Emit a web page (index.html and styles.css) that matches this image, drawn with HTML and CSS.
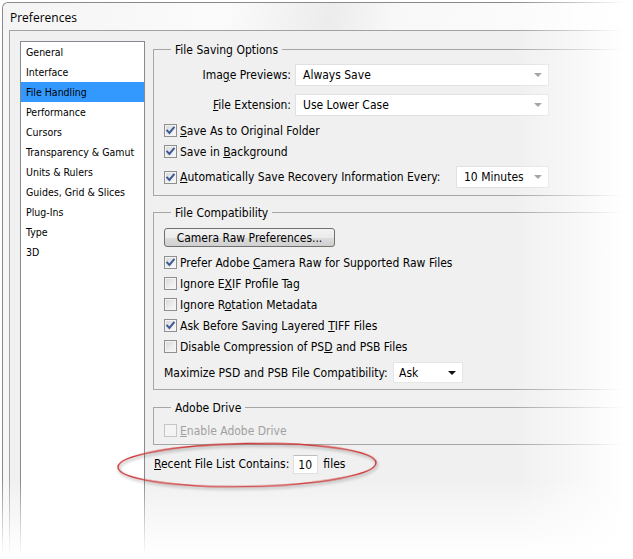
FILE: index.html
```html
<!DOCTYPE html>
<html lang="en">
<head>
  <meta charset="UTF-8">
  <title>Preferences</title>
  <link rel="stylesheet" href="styles.css">
</head>
<body>
  <div class="window">
    <div class="titlebar">Preferences</div>
    <div class="frame">
      <div class="client">
        <!-- Category list -->
        <ul class="nav">
          <li>General</li>
          <li>Interface</li>
          <li class="active">File Handling</li>
          <li>Performance</li>
          <li>Cursors</li>
          <li>Transparency &amp; Gamut</li>
          <li>Units &amp; Rulers</li>
          <li>Guides, Grid &amp; Slices</li>
          <li>Plug-Ins</li>
          <li>Type</li>
          <li>3D</li>
        </ul>

        <!-- Settings panel -->
        <div class="panel">
          <section class="group saving">
            <div class="group-head"><span>File Saving Options</span></div>
            <div class="group-body">
              <div class="field">
                <span class="field-label">Ima<u>g</u>e Previews:</span>
                <div class="select wide"><span>Always Save</span><i class="arrow"></i></div>
              </div>
              <div class="field">
                <span class="field-label"><u>F</u>ile Extension:</span>
                <div class="select wide"><span>Use Lower Case</span><i class="arrow"></i></div>
              </div>
              <div class="check first">
                <span class="box"><svg viewBox="0 0 11 11"><polyline points="2.2,5.6 4.4,8 8.8,2.6"/></svg></span>
                <span><u>S</u>ave As to Original Folder</span>
              </div>
              <div class="check">
                <span class="box"><svg viewBox="0 0 11 11"><polyline points="2.2,5.6 4.4,8 8.8,2.6"/></svg></span>
                <span>Save in <u>B</u>ackground</span>
              </div>
              <div class="check with-select">
                <span class="box"><svg viewBox="0 0 11 11"><polyline points="2.2,5.6 4.4,8 8.8,2.6"/></svg></span>
                <span><u>A</u>utomatically Save Recovery Information Every:</span>
                <div class="select minutes"><span>10 Minutes</span><i class="arrow"></i></div>
              </div>
            </div>
          </section>

          <section class="group compat">
            <div class="group-head"><span>File Compatibility</span></div>
            <div class="group-body">
              <button class="btn">Camera Raw Preferences...</button>
              <div class="check first">
                <span class="box"><svg viewBox="0 0 11 11"><polyline points="2.2,5.6 4.4,8 8.8,2.6"/></svg></span>
                <span>Prefer Adobe <u>C</u>amera Raw for Supported Raw Files</span>
              </div>
              <div class="check">
                <span class="box"></span>
                <span>Ignore E<u>X</u>IF Profile Tag</span>
              </div>
              <div class="check">
                <span class="box"></span>
                <span>Ignore R<u>o</u>tation Metadata</span>
              </div>
              <div class="check">
                <span class="box"><svg viewBox="0 0 11 11"><polyline points="2.2,5.6 4.4,8 8.8,2.6"/></svg></span>
                <span>Ask Before Saving Layered <u>T</u>IFF Files</span>
              </div>
              <div class="check">
                <span class="box"></span>
                <span>Disable Compression of PS<u>D</u> and PSB Files</span>
              </div>
              <div class="maximize">
                <span class="maximize-label">Maximize PSD and PSB File Compatibility:</span>
                <div class="select ask"><span>Ask</span><i class="arrow dark"></i></div>
              </div>
            </div>
          </section>

          <section class="group drive">
            <div class="group-head"><span>Adobe Drive</span></div>
            <div class="group-body">
              <div class="check disabled">
                <span class="box"></span>
                <span><u>E</u>nable Adobe Drive</span>
              </div>
            </div>
          </section>

          <div class="recent">
            <span><u>R</u>ecent File List Contains:</span>
            <span class="num-input">10</span>
            <span>files</span>
          </div>
        </div>
      </div>
    </div>
  </div>

  <!-- annotation ring and edge fades drawn over the screenshot -->
  <svg class="ring" width="633" height="559" viewBox="0 0 633 559">
    <ellipse cx="247" cy="465" rx="129" ry="21.5" transform="rotate(-1 247 465)"/>
  </svg>
  <div class="fade fade-right"></div>
  <div class="fade fade-bottom"></div>
</body>
</html>
```

FILE: styles.css
```css
/* Basic reset */
* {
  box-sizing: border-box;
}
body {
  margin: 0;
  width: 633px;
  height: 559px;
  overflow: hidden;
  position: relative;
  background: #fff;
  font-family: "DejaVu Sans Condensed", "DejaVu Sans", sans-serif;
  font-size: 12px;
  color: #000;
}
u {
  text-underline-offset: 1px;
}

/* Window frame */
.window {
  margin: 2px 0 0 2px;
  width: 631px;
  height: 557px;
  overflow: hidden;
  border: 1px solid #8a8a8a;
  border-right: none;
  border-bottom: none;
  border-radius: 6px 0 0 0;
  background: #f7f7f7;
  display: flex;
  flex-direction: column;
}
.titlebar {
  height: 27px;
  flex: none;
  padding: 1px 0 0 7px;
  display: flex;
  align-items: center;
  font-family: "Open Sans", "Noto Sans", sans-serif;
  font-size: 12px;
  border-radius: 5px 0 0 0;
  background: linear-gradient(100deg, #f4f4f4 0%, #fbfbfb 35%, #ececec 52%, #f8f8f8 62%, #fdfdfd 100%);
}
.frame {
  flex: 1;
  min-height: 0;
  display: flex;
  padding-left: 6px;
}
.client {
  flex: 1;
  min-width: 0;
  display: flex;
  padding: 10px 0 0 10px;
  background: #f0f0f0;
  border-top: 1px solid #a2a2a2;
  border-left: 1px solid #a2a2a2;
}

/* Category list */
.nav {
  width: 125px;
  flex: none;
  margin: 0;
  padding: 0;
  list-style: none;
  background: #fff;
  border: 1px solid #868a91;
  border-bottom: none;
  font-size: 10.5px;
}
.nav li {
  height: 20px;
  line-height: 20px;
  padding-left: 5px;
  white-space: nowrap;
}
.nav li.active {
  background: #3399ff;
}

/* Settings panel */
.panel {
  flex: 1;
  min-width: 0;
  padding: 1px 0 0 8px;
}
.group-head {
  display: flex;
  height: 16px;
  align-items: center;
}
.group-head::before,
.group-head::after {
  content: '';
  height: 8px;
  align-self: flex-end;
  border-top: 1px solid #a6a6a6;
}
.group-head::before {
  width: 17px;
  border-left: 1px solid #a6a6a6;
}
.group-head::after {
  flex: 1;
}
.group-head span {
  padding: 0 4px;
}
.group-body {
  border-left: 1px solid #a6a6a6;
  border-bottom: 1px solid #a6a6a6;
  padding-left: 10px;
}
.saving .group-body {
  padding-top: 6px;
  padding-bottom: 7px;
}
.compat {
  margin-top: 9px;
}
.compat .group-body {
  padding-top: 7px;
  padding-bottom: 6px;
}
.drive {
  margin-top: 10px;
}
.drive .group-body {
  padding-top: 4px;
  padding-bottom: 3px;
}

/* Label + dropdown rows */
.field {
  display: flex;
  align-items: center;
  height: 22px;
}
.field + .field {
  margin-top: 8px;
}
.field-label {
  width: 127px;
  margin-right: 4px;
  text-align: right;
  white-space: nowrap;
}
.select {
  display: flex;
  align-items: center;
  justify-content: space-between;
  height: 22px;
  padding: 0 6px 0 7px;
  background: #fff;
  border: 1px solid #e1e1e1;
}
.select.wide {
  width: 254px;
}
.select.minutes {
  width: 93px;
  margin-left: auto;
}
.select.ask {
  width: 70px;
  height: 21px;
  padding-left: 5px;
  border-color: #e6e6e6;
}
.arrow {
  width: 0;
  height: 0;
  border-left: 4px solid transparent;
  border-right: 4px solid transparent;
  border-top: 4px solid #8f8f8f;
}
.arrow.dark {
  border-top-color: #111;
}

/* Checkboxes */
.check {
  display: flex;
  align-items: center;
  height: 21px;
  width: 385px;
  white-space: nowrap;
}
.check.first {
  margin-top: 4px;
}
.check.with-select {
  margin-top: 4px;
  height: 22px;
}
.box {
  width: 13px;
  height: 13px;
  margin-right: 3px;
  flex: none;
  border: 1px solid #8f8f8f;
  background: linear-gradient(135deg, #d6d6d6 0%, #ececec 55%, #fafafa 100%);
  box-shadow: inset 0 0 0 1px #f4f4f4;
}
.box svg {
  display: block;
  width: 11px;
  height: 11px;
}
.box polyline {
  fill: none;
  stroke: #3d5a98;
  stroke-width: 2;
  stroke-linecap: square;
}
.check.disabled {
  color: #a0a0a0;
}
.check.disabled .box {
  border-color: #c6c6c6;
  background: #f4f4f4;
  box-shadow: none;
}

/* Button */
.btn {
  display: block;
  width: 171px;
  height: 19px;
  padding: 0;
  font: inherit;
  color: #000;
  border: 1px solid #707070;
  border-radius: 3px;
  background: linear-gradient(#f3f3f3 0%, #ebebeb 50%, #dddddd 51%, #cfcfcf 100%);
}
.btn + .check.first {
  margin-top: 5px;
}

.maximize {
  display: flex;
  align-items: center;
  height: 21px;
  margin-top: 5px;
}
.maximize-label {
  width: 229px;
  white-space: nowrap;
}

/* Recent files row */
.recent {
  display: flex;
  align-items: center;
  height: 20px;
  margin-top: 9px;
  padding-left: 1px;
  white-space: nowrap;
}
.num-input {
  width: 25px;
  height: 19px;
  margin: 0 5px 0 4px;
  padding-left: 4px;
  line-height: 18px;
  background: #fff;
  border: 1px solid #e0e0e0;
  border-top-color: #bdbdbd;
}

/* Annotation ring */
.ring {
  position: absolute;
  left: 0;
  top: 0;
  pointer-events: none;
}
.ring ellipse {
  fill: none;
  stroke: #cf3a3a;
  stroke-width: 1.4;
  filter: drop-shadow(1px 2px 1.5px rgba(0, 0, 0, 0.35));
}

/* Soft edges of the screenshot */
.fade {
  position: absolute;
  pointer-events: none;
}
.fade-right {
  top: 0;
  right: 0;
  width: 120px;
  height: 100%;
  background: linear-gradient(to right, rgba(255, 255, 255, 0) 0%, rgba(255, 255, 255, 0.55) 55%, #fff 92%);
}
.fade-bottom {
  left: 0;
  bottom: 0;
  width: 100%;
  height: 80px;
  background: linear-gradient(to bottom, rgba(255, 255, 255, 0) 0%, rgba(255, 255, 255, 0.6) 55%, #fff 96%);
}
```
